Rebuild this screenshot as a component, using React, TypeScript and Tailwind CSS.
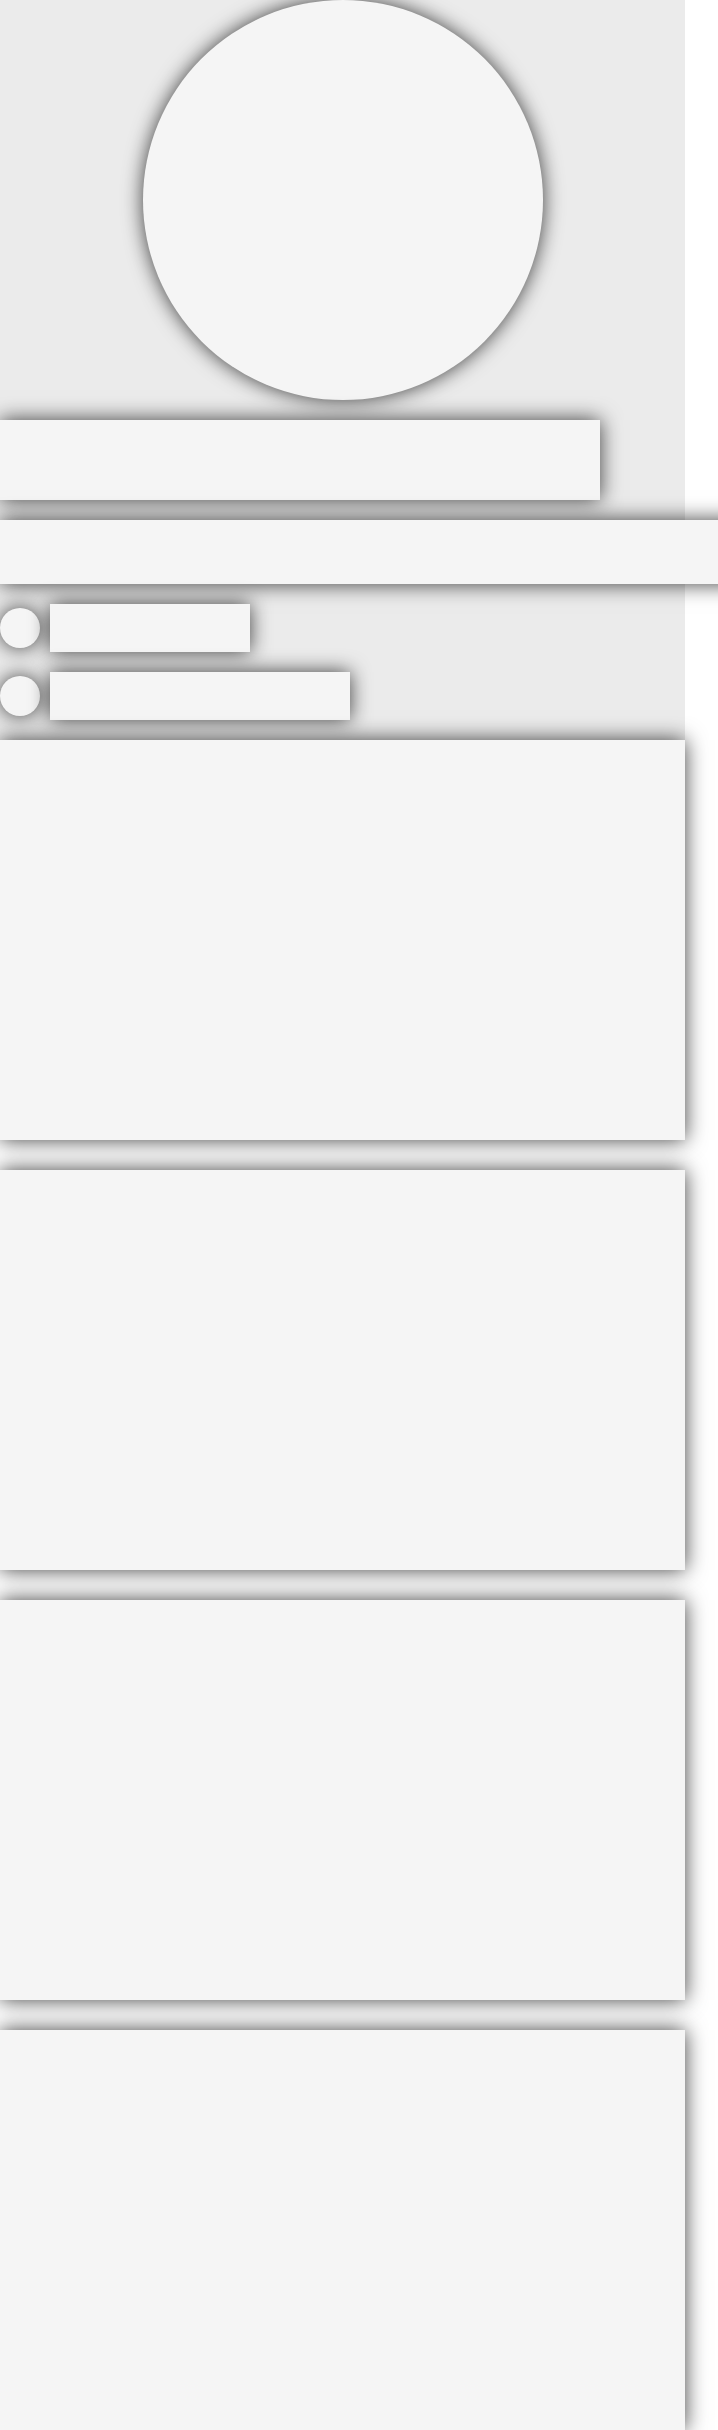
import React from "react";

const sh = "shadow-[0_0_20px_rgba(0,0,0,0.75)]";

export default function App() {
  return (
    <div className="w-[718px] bg-white overflow-hidden">
      <div className="w-[685px] bg-[#ebebeb] flex flex-col gap-5 pb-5">
        <div className={`w-[400px] h-[400px] mx-auto rounded-full bg-[#f5f5f5] ${sh}`} />
        <div className={`w-[600px] h-20 bg-[#f5f5f5] ${sh}`} />
        <div className={`w-[740px] h-16 bg-[#f5f5f5] ${sh}`} />
        <div className="flex items-center gap-[10px] h-12">
          <div className={`w-10 h-10 rounded-full bg-[#f5f5f5] ${sh}`} />
          <div className={`w-[200px] h-12 bg-[#f5f5f5] ${sh}`} />
        </div>
        <div className="flex items-center gap-[10px] h-12">
          <div className={`w-10 h-10 rounded-full bg-[#f5f5f5] ${sh}`} />
          <div className={`w-[300px] h-12 bg-[#f5f5f5] ${sh}`} />
        </div>
      </div>
      <div className="w-[685px] flex flex-col gap-[30px]">
        <div className={`h-[400px] bg-[#f5f5f5] ${sh}`} />
        <div className={`h-[400px] bg-[#f5f5f5] ${sh}`} />
        <div className={`h-[400px] bg-[#f5f5f5] ${sh}`} />
        <div className={`h-[400px] bg-[#f5f5f5] ${sh}`} />
      </div>
    </div>
  );
}
